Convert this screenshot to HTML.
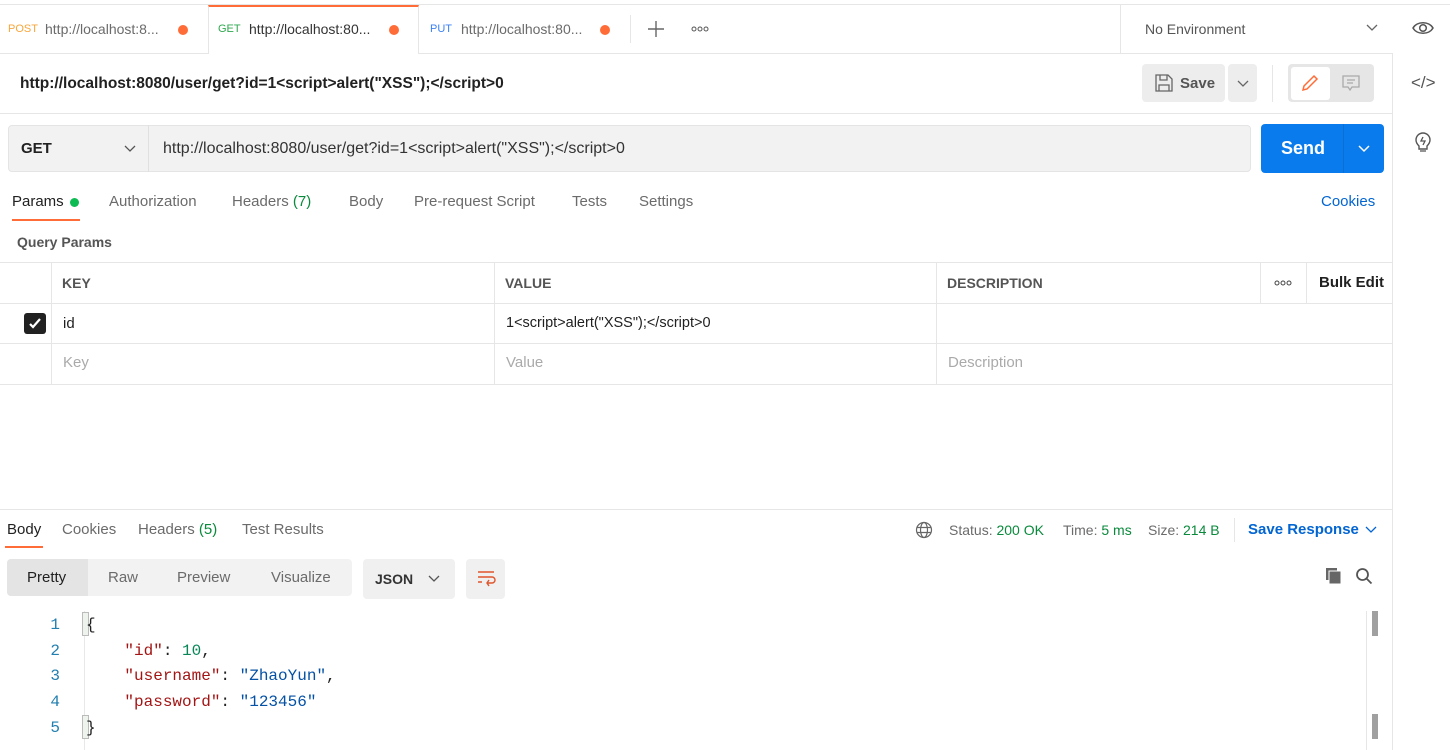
<!DOCTYPE html>
<html><head><meta charset="utf-8"><style>
*{box-sizing:border-box;margin:0;padding:0}
body{width:1450px;height:750px;overflow:hidden;background:#fff;font-family:"Liberation Sans",Arial,sans-serif;font-size:14px;color:#212121;position:relative}
.a{position:absolute;white-space:nowrap}
.hl{position:absolute;height:1px;background:#e6e6e6}
.vl{position:absolute;width:1px;background:#e6e6e6}
.g{color:#6b6b6b}
.mono{font-family:"Liberation Mono","DejaVu Sans Mono",monospace;font-size:16px}
.dot{position:absolute;width:10px;height:10px;border-radius:50%;background:#ff6c37}
</style></head><body>
<div class="hl" style="top:4px;left:0;width:1450px"></div>
<!-- tabs -->
<div class="hl" style="top:53px;left:0;width:1393px"></div>
<div class="a" style="left:8px;top:23px;font-size:11px;color:#f8a63c">POST</div>
<div class="a g" style="left:45px;top:21px">http://localhost:8...</div>
<div class="dot" style="left:178px;top:25px"></div>
<div class="a" style="left:208px;top:5px;width:211px;height:49px;background:#fff;border-top:2px solid #ff6c37;border-left:1px solid #e6e6e6;border-right:1px solid #e6e6e6"></div>
<div class="a" style="left:218px;top:23px;font-size:11px;color:#2fa84f">GET</div>
<div class="a" style="left:249px;top:21px;color:#333">http://localhost:80...</div>
<div class="dot" style="left:389px;top:25px"></div>
<div class="a" style="left:430px;top:23px;font-size:11px;color:#3b82f6">PUT</div>
<div class="a g" style="left:461px;top:21px">http://localhost:80...</div>
<div class="dot" style="left:600px;top:25px"></div>
<div class="vl" style="left:630px;top:15px;height:28px"></div>
<svg class="a" style="left:648px;top:21px" width="16" height="16"><path d="M8 0v16M0 8h16" stroke="#666" stroke-width="1.4"/></svg>
<svg class="a" style="left:691px;top:26px" width="18" height="6"><circle cx="3" cy="3" r="2" stroke="#555" fill="none"/><circle cx="9" cy="3" r="2" stroke="#555" fill="none"/><circle cx="15" cy="3" r="2" stroke="#555" fill="none"/></svg>
<div class="vl" style="left:1120px;top:5px;height:49px"></div>
<div class="a" style="left:1145px;top:21px;color:#555">No Environment</div>
<svg class="a" style="left:1366px;top:24px" width="12" height="8"><path d="M1 1l5 5 5-5" stroke="#666" fill="none" stroke-width="1.3"/></svg>
<svg class="a" style="left:1412px;top:20px" width="22" height="16"><path d="M1 8C5 1 17 1 21 8C17 15 5 15 1 8Z" stroke="#555" fill="none" stroke-width="1.5"/><circle cx="11" cy="8" r="3.3" stroke="#555" fill="none" stroke-width="1.5"/></svg>
<!-- right sidebar -->
<div class="vl" style="left:1392px;top:53px;height:697px"></div>
<div class="a" style="left:1411px;top:73px;font-size:17px;color:#555">&lt;/&gt;</div>
<svg class="a" style="left:1412px;top:131px" width="22" height="22"><path d="M7 15c-2-2-3-4-3-6a7 7 0 0114 0c0 2-1 4-3 6v3H7z" stroke="#555" fill="none" stroke-width="1.4"/><path d="M8 20h6M11 6l-2 4h4l-2 4" stroke="#555" fill="none" stroke-width="1.3"/></svg>
<!-- title -->
<div class="a" style="left:20px;top:75px;font-size:15.5px;font-weight:bold;color:#212121">http://localhost:8080/user/get?id=1&lt;script&gt;alert("XSS");&lt;/script&gt;0</div>
<div class="a" style="left:1142px;top:64px;width:83px;height:38px;background:#ededed;border-radius:4px"></div>
<svg class="a" style="left:1155px;top:74px" width="18" height="18"><path d="M1 1h12l4 4v12H1z M5 1v5h7V1 M4 17v-6h10v6" stroke="#666" fill="none" stroke-width="1.3"/></svg>
<div class="a" style="left:1180px;top:75px;font-weight:bold;color:#555;font-size:15px">Save</div>
<div class="a" style="left:1228px;top:64px;width:29px;height:38px;background:#ededed;border-radius:4px"></div>
<svg class="a" style="left:1237px;top:80px" width="12" height="8"><path d="M1 1l5 5 5-5" stroke="#666" fill="none" stroke-width="1.3"/></svg>
<div class="vl" style="left:1272px;top:65px;height:37px"></div>
<div class="a" style="left:1288px;top:64px;width:86px;height:38px;background:#e6e6e6;border-radius:4px"></div>
<div class="a" style="left:1291px;top:67px;width:39px;height:33px;background:#fff;border-radius:3px"></div>
<svg class="a" style="left:1301px;top:74px" width="18" height="18"><path d="M2 16l1-4L13 2l3 3L6 15z" stroke="#ff6c37" fill="none" stroke-width="1.5"/></svg>
<svg class="a" style="left:1342px;top:75px" width="18" height="17"><path d="M1 1h16v11H10l-2 3-2-3H1z M5 5h8M5 8h6" stroke="#aaa" fill="none" stroke-width="1.3"/></svg>
<div class="hl" style="top:113px;left:0;width:1392px"></div>
<!-- url bar -->
<div class="a" style="left:8px;top:125px;width:1243px;height:47px;background:#f2f2f2;border:1px solid #e4e4e4;border-radius:4px"></div>
<div class="vl" style="left:148px;top:125px;height:47px;background:#e0e0e0"></div>
<div class="a" style="left:21px;top:140px;font-weight:bold;font-size:15px">GET</div>
<svg class="a" style="left:124px;top:145px" width="12" height="8"><path d="M1 1l5 5 5-5" stroke="#555" fill="none" stroke-width="1.3"/></svg>
<div class="a" style="left:163px;top:140px;color:#333;font-size:16px">http://localhost:8080/user/get?id=1&lt;script&gt;alert("XSS");&lt;/script&gt;0</div>
<div class="a" style="left:1261px;top:124px;width:123px;height:49px;background:#097bed;border-radius:4px"></div>
<div class="vl" style="left:1343px;top:124px;height:49px;background:#0a6fd4"></div>
<div class="a" style="left:1281px;top:138px;color:#fff;font-weight:bold;font-size:18px">Send</div>
<svg class="a" style="left:1358px;top:145px" width="12" height="8"><path d="M1 1l5 5 5-5" stroke="#fff" fill="none" stroke-width="1.5"/></svg>
<!-- request tabs -->
<div class="a" style="left:12px;top:193px;font-size:15px;color:#212121">Params</div>
<div class="a" style="left:70px;top:198px;width:9px;height:9px;border-radius:50%;background:#0cbb52"></div>
<div class="a" style="left:12px;top:219px;width:68px;height:2px;background:#ff6c37"></div>
<div class="a g" style="left:109px;top:193px;font-size:15px">Authorization</div>
<div class="a g" style="left:232px;top:193px;font-size:15px">Headers <span style="color:#0a8a3c">(7)</span></div>
<div class="a g" style="left:349px;top:193px;font-size:15px">Body</div>
<div class="a g" style="left:414px;top:193px;font-size:15px">Pre-request Script</div>
<div class="a g" style="left:572px;top:193px;font-size:15px">Tests</div>
<div class="a g" style="left:639px;top:193px;font-size:15px">Settings</div>
<div class="a" style="left:1321px;top:193px;font-size:15px;color:#0265d2">Cookies</div>
<div class="a" style="left:17px;top:234px;font-weight:bold;color:#555">Query Params</div>
<!-- table -->
<div class="hl" style="top:262px;left:0;width:1392px"></div>
<div class="hl" style="top:303px;left:0;width:1392px"></div>
<div class="hl" style="top:343px;left:0;width:1392px"></div>
<div class="hl" style="top:384px;left:0;width:1392px"></div>
<div class="vl" style="left:51px;top:262px;height:122px"></div>
<div class="vl" style="left:494px;top:262px;height:122px"></div>
<div class="vl" style="left:936px;top:262px;height:122px"></div>
<div class="vl" style="left:1260px;top:262px;height:41px"></div>
<div class="vl" style="left:1306px;top:262px;height:41px"></div>
<div class="a" style="left:62px;top:275px;font-weight:bold;color:#555">KEY</div>
<div class="a" style="left:505px;top:275px;font-weight:bold;color:#555">VALUE</div>
<div class="a" style="left:947px;top:275px;font-weight:bold;color:#555">DESCRIPTION</div>
<svg class="a" style="left:1274px;top:280px" width="18" height="6"><circle cx="3" cy="3" r="2" stroke="#444" fill="none"/><circle cx="9" cy="3" r="2" stroke="#444" fill="none"/><circle cx="15" cy="3" r="2" stroke="#444" fill="none"/></svg>
<div class="a" style="left:1319px;top:274px;font-weight:bold;color:#212121;font-size:15px">Bulk Edit</div>
<div class="a" style="left:24px;top:313px;width:22px;height:21px;background:#212121;border-radius:3px"></div>
<svg class="a" style="left:27px;top:316px" width="16" height="15"><path d="M3 8l3 3 7-8" stroke="#fff" fill="none" stroke-width="2.2"/></svg>
<div class="a" style="left:63px;top:315px;font-size:15px">id</div>
<div class="a" style="left:506px;top:315px;font-size:14.5px">1&lt;script&gt;alert("XSS");&lt;/script&gt;0</div>
<div class="a" style="left:63px;top:354px;color:#aaa;font-size:15px">Key</div>
<div class="a" style="left:506px;top:354px;color:#aaa;font-size:15px">Value</div>
<div class="a" style="left:948px;top:354px;color:#aaa;font-size:15px">Description</div>
<!-- response -->
<div class="hl" style="top:509px;left:0;width:1392px"></div>
<div class="a" style="left:7px;top:521px;font-size:15px">Body</div>
<div class="a" style="left:5px;top:546px;width:38px;height:2px;background:#ff6c37"></div>
<div class="a g" style="left:62px;top:521px;font-size:15px">Cookies</div>
<div class="a g" style="left:138px;top:521px;font-size:15px">Headers <span style="color:#0a8a3c">(5)</span></div>
<div class="a g" style="left:242px;top:521px;font-size:15px">Test Results</div>
<svg class="a" style="left:915px;top:521px" width="18" height="18"><circle cx="9" cy="9" r="7.5" stroke="#666" fill="none" stroke-width="1.2"/><ellipse cx="9" cy="9" rx="3.5" ry="7.5" stroke="#666" fill="none" stroke-width="1.2"/><path d="M1.5 6.5h15M1.5 11.5h15" stroke="#666" stroke-width="1.2"/></svg>
<div class="a g" style="left:949px;top:522px">Status: <span style="color:#0a8a3c">200 OK</span></div>
<div class="a g" style="left:1063px;top:522px">Time: <span style="color:#0a8a3c">5 ms</span></div>
<div class="a g" style="left:1148px;top:522px">Size: <span style="color:#0a8a3c">214 B</span></div>
<div class="vl" style="left:1234px;top:518px;height:24px"></div>
<div class="a" style="left:1248px;top:521px;font-size:15px;font-weight:bold;color:#0265d2">Save Response</div>
<svg class="a" style="left:1365px;top:526px" width="12" height="8"><path d="M1 1l5 5 5-5" stroke="#0265d2" fill="none" stroke-width="1.3"/></svg>
<div class="a" style="left:7px;top:559px;width:345px;height:37px;background:#f2f2f2;border-radius:4px"></div>
<div class="a" style="left:7px;top:559px;width:81px;height:37px;background:#e4e4e4;border-radius:4px 0 0 4px"></div>
<div class="a" style="left:27px;top:569px;font-size:15px">Pretty</div>
<div class="a g" style="left:108px;top:569px;font-size:15px">Raw</div>
<div class="a g" style="left:177px;top:569px;font-size:15px">Preview</div>
<div class="a g" style="left:271px;top:569px;font-size:15px">Visualize</div>
<div class="a" style="left:363px;top:559px;width:92px;height:40px;background:#f0f0f0;border-radius:4px"></div>
<div class="a" style="left:375px;top:571px;font-weight:bold;color:#333;font-size:14px">JSON</div>
<svg class="a" style="left:428px;top:575px" width="12" height="8"><path d="M1 1l5 5 5-5" stroke="#555" fill="none" stroke-width="1.3"/></svg>
<div class="a" style="left:466px;top:559px;width:39px;height:40px;background:#f0f0f0;border-radius:4px"></div>
<svg class="a" style="left:476px;top:570px" width="20" height="18"><path d="M2 2h16M2 7h14a3 3 0 010 6h-5M13 10l-2 3 2 3M2 12h4" stroke="#e0542a" fill="none" stroke-width="1.4"/></svg>
<svg class="a" style="left:1325px;top:567px" width="18" height="18"><rect x="1" y="1" width="11" height="12" fill="#666"/><rect x="4" y="4" width="12" height="13" fill="#666" stroke="#fff" stroke-width="1"/></svg>
<svg class="a" style="left:1355px;top:567px" width="18" height="18"><circle cx="7.5" cy="7.5" r="5.5" stroke="#555" fill="none" stroke-width="1.8"/><path d="M11.5 11.5l5 5" stroke="#555" stroke-width="1.8"/></svg>
<!-- code -->
<div class="a mono" style="left:48px;top:613px;line-height:25.7px;color:#227fb0;text-align:right;width:12px">1<br>2<br>3<br>4<br>5</div>
<div class="vl" style="left:84px;top:611px;height:139px;background:#e8e8e8"></div>
<div class="a" style="left:82px;top:612px;width:7px;height:24px;background:#eef3ee;border:1px solid #bbb"></div>
<div class="a" style="left:82px;top:715px;width:7px;height:24px;background:#eef3ee;border:1px solid #bbb"></div>
<div class="a mono" style="left:86px;top:613px;line-height:25.7px;color:#212121;white-space:pre">{
    <span style="color:#a31515">"id"</span>: <span style="color:#098658">10</span>,
    <span style="color:#a31515">"username"</span>: <span style="color:#0451a5">"ZhaoYun"</span>,
    <span style="color:#a31515">"password"</span>: <span style="color:#0451a5">"123456"</span>
}</div>
<div class="vl" style="left:1366px;top:611px;height:139px"></div>
<div class="a" style="left:1372px;top:611px;width:6px;height:25px;background:#a0a0a0"></div>
<div class="a" style="left:1372px;top:714px;width:6px;height:25px;background:#a0a0a0"></div>
</body></html>
